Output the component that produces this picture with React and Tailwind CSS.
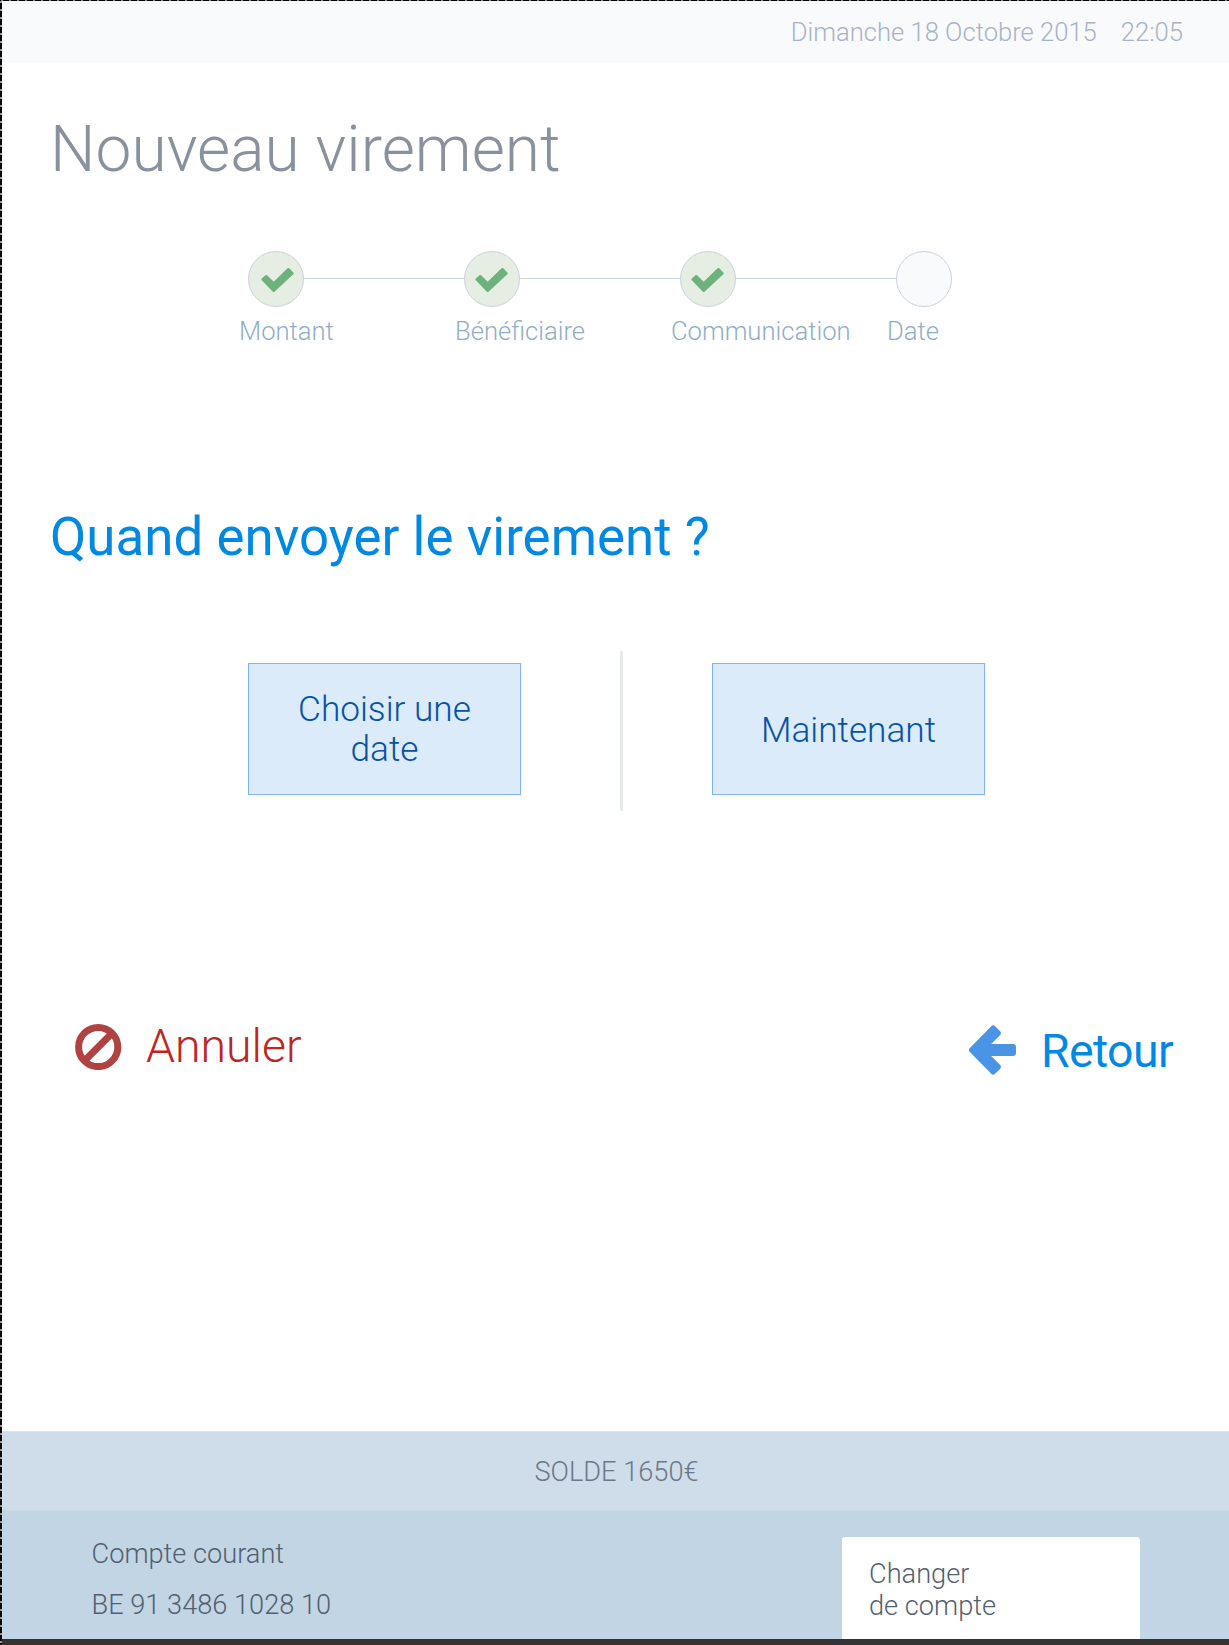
const steps = [
  { label: "Montant", done: true, shift: "translate-x-[2px]" },
  { label: "Bénéficiaire", done: true, shift: "" },
  { label: "Communication", done: true, shift: "" },
  { label: "Date", done: false, shift: "" },
];

function Check({ className }) {
  return (
    <svg viewBox="0 0 56 56" className={"size-[56px] shrink-0 " + className}>
      <path
        d="M12.6 28.4 L16.2 25.2 L23.7 32.4 L38.4 18.2 L42.5 22.3 L23.7 40 Z"
        fill="#6db27b"
        stroke="#6db27b"
        strokeWidth="2.4"
        strokeLinejoin="round"
      />
    </svg>
  );
}

function Stepper() {
  return (
    <ol className="mt-[69px] ml-[237px] flex">
      {steps.map((step, i) => (
        <li key={step.label} className="w-[216px] shrink-0">
          <div className="flex items-start pl-[9px]">
            <div
              className={
                "flex size-[56px] shrink-0 items-center justify-center rounded-full border border-[#c9d2dc] " +
                (step.done ? "bg-[#e6eee3]" : "bg-[#f8fafc]")
              }
            >
              {step.done && <Check className={step.shift} />}
            </div>
            {i < steps.length - 1 && <div className="mt-[27px] -mr-[9px] h-px flex-1 bg-[#c9d6e2]" />}
          </div>
          <div className="mt-2 text-[25.6px] leading-8 whitespace-nowrap text-[#8fadc9]">{step.label}</div>
        </li>
      ))}
    </ol>
  );
}

function Choice({ children, className = "" }) {
  return (
    <button
      className={
        "mt-3 flex h-[132px] w-[273px] items-center justify-center border border-[#7fb2ee] bg-[#dbebfa] px-10 text-center text-[35.2px] leading-10 text-[#0552a8] " +
        className
      }
    >
      {children}
    </button>
  );
}

export default function App() {
  return (
    <div className="flex h-[1645px] w-[1229px] flex-col overflow-hidden bg-white font-['Roboto',sans-serif] font-light">
      <div className="h-px shrink-0 bg-[repeating-linear-gradient(90deg,#000_0_1px,#888_1px_3px,#000_3px_8px)]" />
      <div className="flex min-h-0 flex-1">
        <div className="w-[2px] shrink-0 bg-[repeating-linear-gradient(180deg,#999_0_2px,#000_2px_8px)]" />
        <div className="flex min-w-0 flex-1 flex-col">
          <header className="flex h-[62px] shrink-0 items-center justify-end gap-6 bg-[#f9fafc] pr-[46px] text-[25.6px] text-[#a7b3c5]">
            <span>Dimanche 18 Octobre 2015</span>
            <span>22:05</span>
          </header>

          <main className="flex h-[1368px] shrink-0 flex-col">
            <h1 className="mt-[55px] ml-12 text-[64px] leading-[64px] tracking-[0.05px] text-[#88919d]">
              Nouveau virement
            </h1>
            <Stepper />
            <h2 className="mt-[160px] ml-12 text-[52.8px] leading-[60px] font-normal tracking-[0.05px] text-[#0088e2]">
              Quand envoyer le virement ?
            </h2>
            <div className="mt-[84px] ml-[246px] flex items-start">
              <Choice>Choisir une date</Choice>
              <div className="mr-[89px] ml-[99px] h-[160px] w-[3px] bg-[#e6eaed]" />
              <Choice className="pt-px">Maintenant</Choice>
            </div>
            <div className="mt-[207px] mr-[56px] ml-[73px] flex justify-between">
              <button className="flex h-14 items-center text-[46.4px] leading-[56px] text-[#bd2621]">
                <svg viewBox="0 0 48 48" className="mr-[23px] size-12" fill="none" stroke="#b14242" strokeWidth="7">
                  <circle cx="23.2" cy="25" r="19.6" />
                  <path d="M10 38.2 L36.5 11.8" />
                </svg>
                Annuler
              </button>
              <button className="mt-[5px] flex h-14 items-center text-[46.4px] leading-[56px] font-normal tracking-[-0.6px] text-[#0088e2]">
                <svg
                  viewBox="0 0 50 52"
                  className="mr-6 h-[52px] w-[50px] -translate-y-px"
                  fill="#4a94e6"
                  stroke="#4a94e6"
                  strokeWidth="6"
                  strokeLinejoin="round"
                >
                  <path d="M5 26 L26.2 4.5 L30.8 9.2 L17 23 H46 V29 H17 L30.8 42.8 L26.2 47.5 Z" />
                </svg>
                Retour
              </button>
            </div>
          </main>

          <footer className="flex flex-1 flex-col">
            <div className="flex h-[80px] shrink-0 items-center justify-center border-t border-b border-t-[#dde6ee] border-b-[#cbd7e2] bg-[#cfddea] pt-[3px] pl-[2px] text-[27.2px] text-[#6b7887]">
              SOLDE 1650€
            </div>
            <div className="flex h-[128px] shrink-0 justify-between bg-[#c2d5e4] pr-[89px] pl-[89.5px] text-[27.2px] text-[#525f70]">
              <div className="pt-[18px] leading-[51px]">
                <div>Compte courant</div>
                <div>BE 91 3486 1028 10</div>
              </div>
              <button className="mt-[26px] w-[298px] rounded-t-[3px] bg-white pt-[3px] pl-[27px] text-left leading-8">
                Changer
                <br />
                de compte
              </button>
            </div>
            <div className="flex-1 bg-[#333333]" />
          </footer>
        </div>
      </div>
    </div>
  );
}
